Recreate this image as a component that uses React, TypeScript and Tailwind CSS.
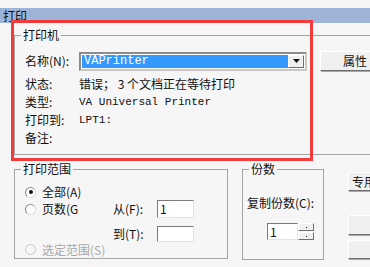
import React from "react";

const CJK = "font-['SimSun','Noto_Sans_CJK_SC',sans-serif]";
const MONO = "font-['Liberation_Mono','Noto_Sans_CJK_SC',monospace]";

function Legend({ text, left }: { text: string; left: string }) {
  return (
    <span
      className={`absolute top-[-9px] ${left} bg-[#f6f6f6] px-[2px] text-[12px] leading-[16px] text-[#111]`}
    >
      {text}
    </span>
  );
}

function Radio({ checked, disabled }: { checked?: boolean; disabled?: boolean }) {
  return (
    <span
      className={`flex h-[11px] w-[11px] shrink-0 items-center justify-center rounded-full border ${
        disabled ? "border-[#c8c8c8] bg-[#f6f6f6]" : "border-t-[#8a8a8a] border-l-[#8a8a8a] border-r-[#dcdcdc] border-b-[#dcdcdc] bg-white"
      }`}
    >
      {checked && <span className="h-[4px] w-[4px] rounded-full bg-[#111]" />}
    </span>
  );
}

function Sunken({ className, children }: { className: string; children?: React.ReactNode }) {
  return (
    <div
      className={`flex shrink-0 items-center border border-t-[#7a7a7a] border-l-[#7a7a7a] border-r-[#e4e4e4] border-b-[#e4e4e4] bg-white ${className}`}
    >
      {children}
    </div>
  );
}

function Button({ className, children }: { className: string; children?: React.ReactNode }) {
  return (
    <div
      className={`flex shrink-0 items-center justify-center border border-t-white border-l-white border-r-[#6e6e6e] border-b-[#6e6e6e] bg-[#f0f0f0] shadow-[1px_1px_0_#a8a8a8] ${className}`}
    >
      {children}
    </div>
  );
}

export default function App() {
  const rows = [
    { label: "状态:", value: "错误； 3 个文档正在等待打印", mono: false },
    { label: "类型:", value: "VA Universal Printer", mono: true },
    { label: "打印到:", value: "LPT1:", mono: true },
    { label: "备注:", value: "", mono: false },
  ];

  return (
    <div className={`relative h-[267px] w-[370px] overflow-hidden bg-[#f6f6f6] text-[12px] text-[#111] ${CJK}`}>
      <div className="h-[8px]" />
      <div className="flex h-[15px] items-center bg-[#9db4d8] pl-[3px] leading-[15px]">打印</div>

      {/* printer group */}
      <div className="relative ml-[14px] mt-[12px] h-[120px] w-[420px] border border-[#a4a4a4] pl-[10px] pt-[15px]">
        <Legend text="打印机" left="left-[6px]" />
        <div className="flex h-[20px] items-center">
          <span className="w-[54px] shrink-0">名称(N):</span>
          <div className="flex h-[19px] w-[228px] shrink-0 border-2 border-t-[#8c8c8c] border-l-[#8c8c8c] border-r-[#c8c8c8] border-b-[#c8c8c8] bg-white p-[1px]">
            <div className={`flex flex-1 items-center bg-[#3399ff] pl-[2px] text-[12px] text-white ${MONO}`}>
              VAPrinter
            </div>
            <div className="flex w-[16px] items-center justify-center border border-t-white border-l-white border-r-[#6e6e6e] border-b-[#6e6e6e] bg-[#efefef]">
              <svg width="7" height="4" viewBox="0 0 7 4">
                <path d="M0 0h7L3.5 4z" fill="#111" />
              </svg>
            </div>
          </div>
          <Button className="ml-[13px] h-[20px] w-[70px] justify-start pl-[22px]">属性</Button>
        </div>
        <div className="mt-[4px] flex flex-col">
          {rows.map((r) => (
            <div key={r.label} className="flex h-[18px] items-center">
              <span className="w-[54px] shrink-0">{r.label}</span>
              <span className={r.mono ? `${MONO} text-[11px]` : "whitespace-pre"}>{r.value}</span>
            </div>
          ))}
        </div>
      </div>

      <div className="mt-[14px] flex items-start">
        {/* range group */}
        <div className="relative ml-[14px] flex h-[90px] w-[214px] shrink-0 flex-col border border-[#a4a4a4] pt-[14px]">
          <Legend text="打印范围" left="left-[6px]" />
          <div className="flex h-[16px] items-center pl-[10px]">
            <Radio checked />
            <span className="ml-[6px]">全部(A)</span>
          </div>
          <div className="flex h-[18px] items-center pl-[10px]">
            <Radio />
            <span className="ml-[6px] w-[71px] shrink-0">页数(G</span>
            <span className="w-[44px] shrink-0">从(F):</span>
            <Sunken className="h-[18px] w-[37px] pl-[2px]">1</Sunken>
          </div>
          <div className="mt-[8px] flex h-[16px] items-center pl-[98px]">
            <span className="w-[44px] shrink-0">到(T):</span>
            <Sunken className="h-[16px] w-[37px]" />
          </div>
          <div className="relative ml-[9px] flex h-[19px] w-[96px] items-start bg-[#f6f6f6] pl-[1px] pt-[1px] text-[#a8a8a8]">
            <span className="mt-[1px]">
              <Radio disabled />
            </span>
            <span className="ml-[6px] leading-[14px]">选定范围(S)</span>
          </div>
        </div>

        {/* copies group */}
        <div className="relative ml-[14px] flex h-[91px] w-[82px] shrink-0 flex-col border border-[#a4a4a4] pl-[4px] pt-[25px]">
          <Legend text="份数" left="left-[6px]" />
          <span className="whitespace-nowrap leading-[16px]">复制份数(C):</span>
          <div className="ml-[20px] mt-[12px] flex h-[17px] w-[47px]">
            <Sunken className="h-[17px] w-[31px] pl-[2px]">1</Sunken>
            <div className="flex w-[16px] flex-col">
              <Button className="h-[8px] w-[16px] shadow-none">
                <span className="h-[1px] w-[1px] bg-[#111]" />
              </Button>
              <Button className="mt-[1px] h-[8px] w-[16px] shadow-none">
                <span className="h-[1px] w-[1px] bg-[#111]" />
              </Button>
            </div>
          </div>
        </div>

        {/* side buttons */}
        <div className="ml-[24px] mt-[3px] flex shrink-0 flex-col">
          <Button className="h-[19px] w-[40px] justify-start pl-[3px]">专用</Button>
          <Button className="mt-[24px] h-[20px] w-[40px]" />
          <Button className="mt-[5px] h-[19px] w-[40px]" />
        </div>
      </div>

      {/* annotation */}
      <div className="pointer-events-none absolute left-[11px] top-[20px] h-[141px] w-[302px] border-[3px] border-[#f33b3b]" />
    </div>
  );
}
